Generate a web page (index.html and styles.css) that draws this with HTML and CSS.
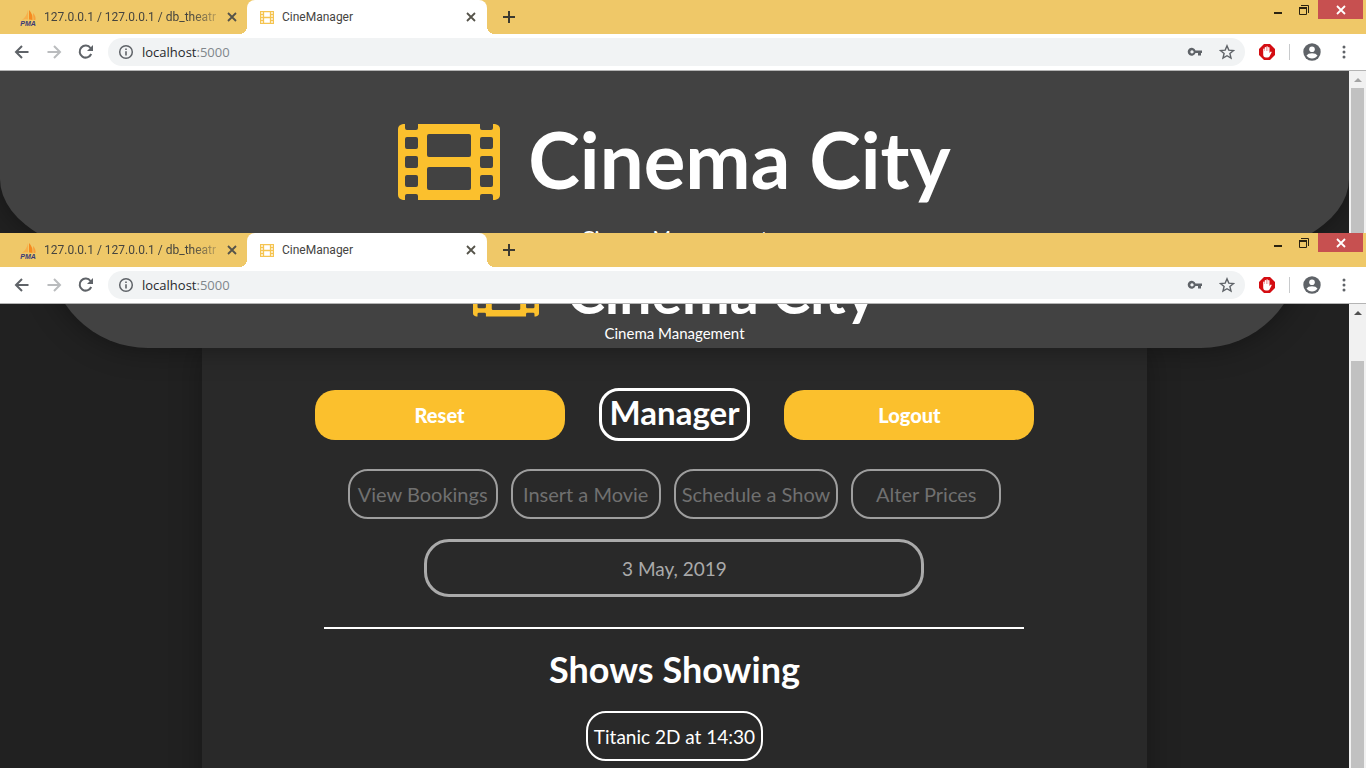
FILE: index.html
```html
<!DOCTYPE html>
<html lang="en">
<head>
<meta charset="utf-8">
<title>CineManager</title>
<link rel="stylesheet" href="styles.css">
</head>
<body>
<svg class="sprite" aria-hidden="true">
  <symbol id="film" viewBox="0 0 102 76">
    <path fill-rule="evenodd" d="M5 0H7V4Q7 6 9 6H18Q20 6 20 4V0H82V4Q82 6 84 6H93Q95 6 95 4V0H97Q102 1 102 5V71Q102 75 97 76H95V72Q95 70 93 70H84Q82 70 82 72V76H20V72Q20 70 18 70H9Q7 70 7 72V76H5Q0 75 0 71V5Q0 1 5 0Z
    M9 13Q7 13 7 15V23Q7 25 9 25H18Q20 25 20 23V15Q20 13 18 13Z M9 32Q7 32 7 34V42Q7 44 9 44H18Q20 44 20 42V34Q20 32 18 32Z M9 51Q7 51 7 53V61Q7 63 9 63H18Q20 63 20 61V53Q20 51 18 51Z
    M84 13Q82 13 82 15V23Q82 25 84 25H93Q95 25 95 23V15Q95 13 93 13Z M84 32Q82 32 82 34V42Q82 44 84 44H93Q95 44 95 42V34Q95 32 93 32Z M84 51Q82 51 82 53V61Q82 63 84 63H93Q95 63 95 61V53Q95 51 93 51Z
    M31 10Q29 10 29 12V31Q29 33 31 33H71Q73 33 73 31V12Q73 10 71 10Z M31 43Q29 43 29 45V64Q29 66 31 66H71Q73 66 73 64V45Q73 43 71 43Z"/>
  </symbol>
  <symbol id="favicon" viewBox="0 0 14 13">
    <path d="M.5.5h13v12H.5zM3.5.5v12M10.500.5v12M3.500 6.500h7M.5 3.500h3M.5 6.500h3M.5 9.500h3M10.500 3.500h3M10.500 6.500h3M10.500 9.500h3" fill="none" stroke="#f5c451" stroke-width="1.300"/>
  </symbol>
  <symbol id="sails" viewBox="0 0 16 11">
    <path d="M8 0Q7 6 2 10Q5 9 8 9.500Z" fill="#f7b04a"/><path d="M9 0Q13 4 12.500 10L9 9.500Z" fill="#f58a1f"/><path d="M13 3Q16 6 15.500 10H13.500Z" fill="#f7a03a"/>
  </symbol>
  <symbol id="back" viewBox="0 0 16 16"><path d="M14.500 8H2M8 2L2 8l6 6" fill="none" stroke="currentColor" stroke-width="2"/></symbol>
  <symbol id="forward" viewBox="0 0 16 16"><path d="M1.500 8H14M8 2l6 6-6 6" fill="none" stroke="currentColor" stroke-width="2"/></symbol>
  <symbol id="reload" viewBox="0 0 16 16"><path d="M13.200 10A6 6 0 1 1 12.500 4" fill="none" stroke="currentColor" stroke-width="2"/><path d="M15 1v6H9z" fill="currentColor"/></symbol>
  <symbol id="info" viewBox="0 0 16 16"><circle cx="8" cy="8" r="6.300" fill="none" stroke="#5f6368" stroke-width="1.500"/><path d="M8 7.200v4.300M8 4.500v1.600" stroke="#5f6368" stroke-width="1.600"/></symbol>
  <symbol id="key" viewBox="0 0 16 16"><path fill-rule="evenodd" d="M8.500 6.500H15V9h-1v2.500h-3V9H8.500A4 4 0 1 1 8.500 6.500ZM5 6.300a1.600 1.600 0 1 0 .01 0Z" fill="currentColor"/></symbol>
  <symbol id="star" viewBox="0 0 16 16"><path d="M8 1.800l1.800 4.300 4.700.4-3.600 3 1.100 4.600L8 11.700l-4 2.400 1.100-4.600-3.600-3 4.700-.4z" fill="none" stroke="currentColor" stroke-width="1.400"/></symbol>
  <symbol id="hand" viewBox="0 0 16 16"><path d="M5 0h6l5 5v6l-5 5H5l-5-5V5z" fill="#d40d12"/><path d="M4.200 8V5.200a.6.6 0 0 1 1.200 0V7h.3V3.700a.7.700 0 0 1 1.400 0V7h.3V3a.7.700 0 0 1 1.400 0v4h.3V3.800a.7.700 0 0 1 1.400 0V9l1-1.200a.7.700 0 0 1 1.100.8L10.500 12.500Q10 13.500 8.500 13.500H7Q4.200 13.500 4.200 10.500Z" fill="#fff"/></symbol>
  <symbol id="person" viewBox="0 0 18 18"><circle cx="9" cy="9" r="8.700" fill="#5f6368"/><circle cx="9" cy="6.200" r="2.800" fill="#fff"/><path d="M3.500 12.600Q5 10.300 9 10.300t5.500 2.300Q12.500 15.600 9 15.600t-5.500-3z" fill="#fff"/></symbol>
  <symbol id="dots" viewBox="0 0 4 14"><g fill="#5f6368"><circle cx="2" cy="2" r="1.500"/><circle cx="2" cy="7" r="1.500"/><circle cx="2" cy="12" r="1.500"/></g></symbol>
  <symbol id="cross" viewBox="0 0 10 10"><path d="M1 1l8 8M9 1L1 9" stroke="currentColor" stroke-width="1.800"/></symbol>
  <symbol id="plus" viewBox="0 0 12 12"><path d="M6 0v12M0 6h12" stroke="#3c3a30" stroke-width="2"/></symbol>
  <symbol id="minimize" viewBox="0 0 10 10"><path d="M1 8h8" stroke="#2b2310" stroke-width="2"/></symbol>
  <symbol id="restore" viewBox="0 0 10 10"><path d="M.5 2.500h7v7h-7zM2 .5h7.500V8" fill="none" stroke="#2b2310"/><path d="M0 3h8" stroke="#2b2310" stroke-width="2"/></symbol>
  <symbol id="arrow" viewBox="0 0 8 4"><path d="M4 0l4 4H0z" fill="currentColor"/></symbol>
</svg>

<section class="window window-back">
  <div class="tabs">
    <div class="tab">
      <span class="pma"><svg class="sails"><use href="#sails"/></svg><b class="pma-name">PMA</b></span>
      <span class="tab-title fade">127.0.0.1 / 127.0.0.1 / db_theatre</span>
      <button class="icon-button" aria-label="Close tab"><svg class="i10"><use href="#cross"/></svg></button>
    </div>
    <div class="tab tab-active">
      <svg class="favicon"><use href="#favicon"/></svg>
      <span class="tab-title">CineManager</span>
      <button class="icon-button" aria-label="Close tab"><svg class="i10"><use href="#cross"/></svg></button>
    </div>
    <button class="icon-button new-tab" aria-label="New tab"><svg class="i12"><use href="#plus"/></svg></button>
    <div class="controls">
      <button class="icon-button" aria-label="Minimize"><svg class="i10"><use href="#minimize"/></svg></button>
      <button class="icon-button" aria-label="Restore"><svg class="i10"><use href="#restore"/></svg></button>
      <button class="icon-button close" aria-label="Close"><svg class="i10"><use href="#cross"/></svg></button>
    </div>
  </div>
  <div class="toolbar">
    <button class="icon-button" aria-label="Back"><svg class="i16"><use href="#back"/></svg></button>
    <button class="icon-button disabled" aria-label="Forward"><svg class="i16"><use href="#forward"/></svg></button>
    <button class="icon-button" aria-label="Reload"><svg class="i16"><use href="#reload"/></svg></button>
    <div class="address">
      <svg class="i16"><use href="#info"/></svg>
      <span class="url">localhost<span class="port">:5000</span></span>
      <button class="icon-button" aria-label="Passwords"><svg class="i16"><use href="#key"/></svg></button>
      <button class="icon-button" aria-label="Bookmark"><svg class="i16"><use href="#star"/></svg></button>
    </div>
    <button class="icon-button" aria-label="Ad blocker"><svg class="i16"><use href="#hand"/></svg></button>
    <span class="divider"></span>
    <button class="icon-button" aria-label="Profile"><svg class="i18"><use href="#person"/></svg></button>
    <button class="icon-button" aria-label="Menu"><svg class="dots"><use href="#dots"/></svg></button>
  </div>
  <div class="viewport">
    <div class="page">
      <header class="banner">
        <div class="brand"><svg class="film"><use href="#film"/></svg><h1 class="name">Cinema City</h1></div>
        <p class="tagline">Cinema Management</p>
      </header>
    </div>
    <div class="scrollbar"><svg class="arrow"><use href="#arrow"/></svg><div class="thumb"></div></div>
  </div>
</section>

<section class="window window-front">
  <div class="tabs">
    <div class="tab">
      <span class="pma"><svg class="sails"><use href="#sails"/></svg><b class="pma-name">PMA</b></span>
      <span class="tab-title fade">127.0.0.1 / 127.0.0.1 / db_theatre</span>
      <button class="icon-button" aria-label="Close tab"><svg class="i10"><use href="#cross"/></svg></button>
    </div>
    <div class="tab tab-active">
      <svg class="favicon"><use href="#favicon"/></svg>
      <span class="tab-title">CineManager</span>
      <button class="icon-button" aria-label="Close tab"><svg class="i10"><use href="#cross"/></svg></button>
    </div>
    <button class="icon-button new-tab" aria-label="New tab"><svg class="i12"><use href="#plus"/></svg></button>
    <div class="controls">
      <button class="icon-button" aria-label="Minimize"><svg class="i10"><use href="#minimize"/></svg></button>
      <button class="icon-button" aria-label="Restore"><svg class="i10"><use href="#restore"/></svg></button>
      <button class="icon-button close" aria-label="Close"><svg class="i10"><use href="#cross"/></svg></button>
    </div>
  </div>
  <div class="toolbar">
    <button class="icon-button" aria-label="Back"><svg class="i16"><use href="#back"/></svg></button>
    <button class="icon-button disabled" aria-label="Forward"><svg class="i16"><use href="#forward"/></svg></button>
    <button class="icon-button" aria-label="Reload"><svg class="i16"><use href="#reload"/></svg></button>
    <div class="address">
      <svg class="i16"><use href="#info"/></svg>
      <span class="url">localhost<span class="port">:5000</span></span>
      <button class="icon-button" aria-label="Passwords"><svg class="i16"><use href="#key"/></svg></button>
      <button class="icon-button" aria-label="Bookmark"><svg class="i16"><use href="#star"/></svg></button>
    </div>
    <button class="icon-button" aria-label="Ad blocker"><svg class="i16"><use href="#hand"/></svg></button>
    <span class="divider"></span>
    <button class="icon-button" aria-label="Profile"><svg class="i18"><use href="#person"/></svg></button>
    <button class="icon-button" aria-label="Menu"><svg class="dots"><use href="#dots"/></svg></button>
  </div>
  <div class="viewport">
    <div class="page">
      <header class="banner banner-small">
        <div class="brand"><svg class="film"><use href="#film"/></svg><h1 class="name">Cinema City</h1></div>
        <p class="tagline">Cinema Management</p>
      </header>
      <main class="card">
        <div class="row row-top">
          <button class="solid">Reset</button>
          <h2 class="role">Manager</h2>
          <button class="solid">Logout</button>
        </div>
        <div class="row row-menu">
          <button class="outline">View Bookings</button>
          <button class="outline">Insert a Movie</button>
          <button class="outline">Schedule a Show</button>
          <button class="outline">Alter Prices</button>
        </div>
        <input class="date" type="text" aria-label="Date" value="3 May, 2019">
        <hr class="rule">
        <h2 class="heading">Shows Showing</h2>
        <button class="outline show">Titanic 2D at 14:30</button>
      </main>
    </div>
    <div class="scrollbar scrolled"><svg class="arrow"><use href="#arrow"/></svg><div class="thumb"></div></div>
  </div>
</section>
</body>
</html>
```
FILE: styles.css
```css
* { box-sizing: border-box; }
body {
  margin: 0;
  height: 100vh;
  overflow: hidden;
  display: flex;
  flex-direction: column;
  background: #212121;
  font-family: "Lato", "Liberation Sans", sans-serif;
}
button, input { font-family: inherit; margin: 0; }
.sprite { display: none; }

.window { display: flex; flex-direction: column; overflow: hidden; }
.window-back { flex: 0 0 233px; }
.window-front { flex: 1; min-height: 0; }

/* Browser frame */
.tabs { flex: none; display: flex; height: 34px; background: #efc868; font-family: "Roboto", sans-serif; font-size: 12px; color: #45443f; }
.tab { display: flex; align-items: center; width: 247px; padding: 0 7px 0 20px; gap: 8px; }
.tab-active {
  position: relative;
  width: 240px;
  padding-left: 13px;
  padding-right: 8px;
  background: #fff;
  border-radius: 8px 8px 0 0;
}
.tab-active::before, .tab-active::after {
  content: "";
  position: absolute;
  bottom: 0;
  width: 8px;
  height: 8px;
}
.tab-active::before { right: 100%; background: radial-gradient(circle at 0 0, transparent 8px, #fff 8px); }
.tab-active::after { left: 100%; background: radial-gradient(circle at 100% 0, transparent 8px, #fff 8px); }
.tab-title { flex: 1; min-width: 0; white-space: nowrap; }
.fade { -webkit-mask-image: linear-gradient(to right, #000 85%, rgba(0, 0, 0, 0.3)); mask-image: linear-gradient(to right, #000 85%, rgba(0, 0, 0, 0.3)); }
.tab .icon-button { color: #55534a; }
.pma { display: flex; flex-direction: column; align-items: center; width: 16px; padding-top: 3px; }
.sails { width: 16px; height: 11px; }
.pma-name { font: italic bold 7px/6px "Liberation Sans", sans-serif; color: #3a3a78; }
.favicon { width: 14px; height: 13px; }
.icon-button {
  display: flex;
  align-items: center;
  justify-content: center;
  flex: none;
  width: 16px;
  height: 16px;
  padding: 0;
  border: 0;
  background: none;
  color: #5f6368;
}
.icon-button svg { flex: none; }
.i10 { width: 10px; height: 10px; }
.i12 { width: 12px; height: 12px; }
.i16 { width: 16px; height: 16px; flex: none; }
.i18 { width: 18px; height: 18px; }
.dots { width: 4px; height: 14px; }
.new-tab { align-self: center; margin-left: 14px; }
.controls { display: flex; margin-left: auto; margin-right: 3px; }
.controls .icon-button { width: 26px; height: 19px; }
.controls .close { width: 45px; margin-left: 1px; background: #c75050; color: #fff; }
.toolbar {
  flex: none;
  display: flex;
  align-items: center;
  gap: 16px;
  height: 37px;
  padding: 0 14px;
  background: #fff;
  border-bottom: 1px solid #b4b4b4;
}
.toolbar .disabled { color: #babcbe; }
.address {
  flex: 1;
  display: flex;
  align-items: center;
  gap: 16px;
  height: 28px;
  margin: 0 -2px;
  padding: 0 10px;
  border-radius: 14px;
  background: #f1f3f4;
  font-family: "Open Sans", "Noto Sans", sans-serif;
  font-size: 13px;
  color: #27292c;
}
.url { flex: 1; margin-left: -8px; }
.port { color: #80868b; }
.divider { width: 1px; height: 16px; margin: 0 -2px; background: #c8cacc; }

/* Page area */
.viewport { flex: 1; min-height: 0; display: flex; overflow: hidden; background: #212121; }
.page { flex: 1; min-width: 0; overflow: hidden; }
.scrollbar { width: 17px; flex: none; display: flex; flex-direction: column; align-items: center; background: #f1f1f1; color: #a3a3a3; }
.arrow { width: 8px; height: 4px; margin: 7px 0 6px; flex: none; }
.thumb { width: 13px; flex: 1; background: #c1c1c1; }
.scrolled { color: #505050; }
.scrolled .thumb { margin-top: 40px; }

.banner {
  position: relative;
  height: 190px;
  padding-top: 39px;
  background: #424242;
  color: #fff;
  border-radius: 0 0 150px 150px / 0 0 82px 82px;
  box-shadow: 0 0 30px rgba(0, 0, 0, 0.4);
}
.brand { display: flex; align-items: center; justify-content: center; gap: 28px; height: 104px; }
.film { width: 102px; height: 76px; fill: #fbc02d; }
.name { margin: 0; padding-bottom: 6px; font-size: 78px; line-height: 96px; font-weight: 700; }
.tagline { margin: 0; padding-top: 11px; text-align: center; font-size: 20px; line-height: 24px; }
.banner-small { height: 200px; margin: -156px 48px 0; padding-top: 111px; border-radius: 0 0 100px 100px; }
.banner-small .brand { gap: 28px; height: 66px; }
.banner-small .film { width: 66px; height: 50px; }
.banner-small .name { padding: 0; font-size: 57px; line-height: 66px; }
.banner-small .tagline { padding: 0; font-size: 15px; line-height: 16px; }

.card {
  display: flex;
  flex-direction: column;
  align-items: center;
  width: 70%;
  min-height: 100%;
  margin: 0 auto;
  padding-top: 40px;
  background: #292929;
  color: #fff;
  box-shadow: 0 0 30px rgba(0, 0, 0, 0.3);
}
.row { display: flex; align-items: center; justify-content: center; }
.row-top { gap: 34px; }
.row-menu { gap: 13px; margin: 28px 0 20px; }
.solid { width: 250px; height: 50px; border: 0; border-radius: 20px; background: #fbc02d; color: #fff; font-size: 20px; font-weight: 900; }
.role { margin: 0; padding: 0 8px 4px; border: 3px solid #fff; border-radius: 20px; font-size: 33px; line-height: 43px; }
.outline { min-width: 150px; height: 50px; padding: 0 6px; border: 2px solid #9e9e9e; border-radius: 20px; background: none; color: #707070; font-size: 20px; }
.date { width: 500px; height: 58px; border: 3px solid #aaa; border-radius: 25px; background: none; color: #aaa; font-size: 19px; text-align: center; }
.rule { width: 700px; height: 2px; margin: 30px 0 18px; border: 0; background: #fff; }
.heading { margin: 0 0 20px; font-size: 36px; line-height: 44px; }
.show { border-color: #fff; color: #fff; font-size: 19px; }
```
